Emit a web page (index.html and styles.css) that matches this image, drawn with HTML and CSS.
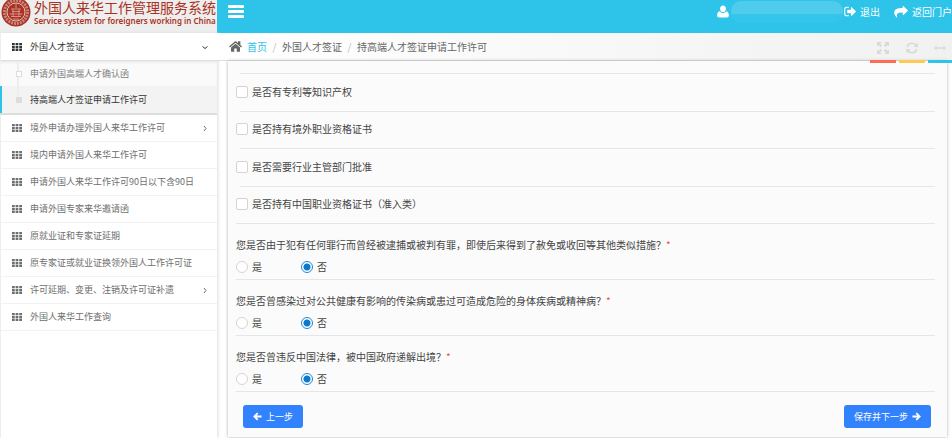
FILE: index.html
```html
<!DOCTYPE html>
<html lang="zh-CN">
<head>
    <meta charset="UTF-8">
    <meta name="viewport" content="width=device-width, initial-scale=1.0">
    <title>外国人来华工作管理服务系统</title>
    <link rel="stylesheet" href="styles.css">
</head>
<body>
    <!-- 图标 -->
    <svg class="sprite" aria-hidden="true">
        <symbol id="i-th" viewBox="0 0 20 16">
            <path d="M0 0h5.500v4.500H0zM7.200 0h5.500v4.500H7.200zM14.500 0H20v4.500h-5.500zM0 5.800h5.500v4.500H0zM7.200 5.800h5.500v4.500H7.200zM14.500 5.800H20v4.500h-5.500zM0 11.500h5.500V16H0zM7.200 11.500h5.500V16H7.200zM14.500 11.500H20V16h-5.500z"/>
        </symbol>
        <symbol id="i-home" viewBox="0 0 26 22">
            <path d="M22 13v7.500c0 .6-.4 1-1 1h-5.500v-6.500h-5v6.500H5c-.6 0-1-.4-1-1V13l9-7.500z"/>
            <path d="M25.600 11.300l-1 1.100c-.3.300-.7.300-1 .1L13 3.600 2.400 12.500c-.3.200-.7.200-1-.1l-1-1.100c-.2-.3-.2-.7.100-1L11.600 1c.8-.7 2-.7 2.800 0L18 4V1.200c0-.4.300-.7.700-.7H22c.4 0 .7.300.7.700v6.700l2.800 2.400c.3.300.3.700.1 1z"/>
        </symbol>
        <symbol id="i-user" viewBox="0 0 22 24">
            <path d="M11 1c3.200 0 5.500 2.500 5.500 6s-2.300 6.500-5.500 6.500S5.500 10.500 5.500 7 7.800 1 11 1z"/>
            <path d="M5 11.500c1.500 2 3.500 3.500 6 3.500s4.500-1.500 6-3.500c3.500.5 4.800 4 4.800 8 0 2.200-1.500 3.500-3.600 3.500H3.800C1.700 23 .2 21.700.2 19.500c0-4 1.300-7.500 4.800-8z"/>
        </symbol>
        <symbol id="i-out" viewBox="0 0 24 20">
            <path d="M9 1.500H5A3.500 3.500 0 0 0 1.500 5v10A3.500 3.500 0 0 0 5 18.500h4" fill="none" stroke="currentColor" stroke-width="2.200" stroke-linecap="round"/>
            <path d="M23.600 10.600l-8 8c-.7.700-1.600.3-1.600-.6V13.500H7.500c-.6 0-1-.4-1-1v-5c0-.6.4-1 1-1H14V2c0-.9.900-1.300 1.600-.6l8 8c.4.400.4.800 0 1.200z"/>
        </symbol>
        <symbol id="i-share" viewBox="0 0 28 24">
            <path d="M27.600 9.700l-8.500 8.100c-.7.700-1.700.3-1.700-.7V12.800c-7 0-11.800.9-11.800 6 0 1.200.3 2.500.8 3.700.3.800-.5 1.200-1 .5C2.500 19.300.4 16.300.4 13 .4 6 7.500 3.800 17.400 3.800V1c0-1 1-1.400 1.700-.7l8.500 8.200c.4.400.4.800 0 1.200z"/>
        </symbol>
        <symbol id="i-expand" viewBox="0 0 24 24">
            <path d="M0 0h9L6.200 2.800l4 4-3.400 3.400-4-4L0 9zM24 0v9l-2.800-2.800-4 4-3.400-3.400 4-4L15 0zM0 24v-9l2.800 2.800 4-4 3.400 3.400-4 4L9 24zM24 24h-9l2.800-2.800-4-4 3.400-3.400 4 4L24 15z"/>
        </symbol>
        <symbol id="i-refresh" viewBox="0 0 24 24">
            <path d="M2.500 10C3.500 5 7.500 2.500 12 2.500c3 0 5.600 1.200 7.600 3.200M21.500 14c-1 5-5 7.500-9.500 7.500-3 0-5.600-1.200-7.600-3.200" fill="none" stroke="currentColor" stroke-width="3.400"/>
            <path d="M23.500 1v9h-9zM.5 23v-9h9z"/>
        </symbol>
        <symbol id="i-width" viewBox="0 0 28 12">
            <path d="M0 6l6-6v4.200h16V0l6 6-6 6V7.800H6V12z"/>
        </symbol>
        <symbol id="i-left" viewBox="0 0 20 20">
            <path d="M10.500 2.500L3 10l7.500 7.500M4 10h15" fill="none" stroke="currentColor" stroke-width="4"/>
        </symbol>
        <symbol id="i-right" viewBox="0 0 20 20">
            <path d="M9.500 2.500L17 10l-7.500 7.500M16 10H1" fill="none" stroke="currentColor" stroke-width="4"/>
        </symbol>
        <symbol id="i-arrow" viewBox="0 0 8 8">
            <path d="M3 2l2 2.500-2 2.500" fill="none" stroke="currentColor"/>
        </symbol>
        <symbol id="i-down" viewBox="0 0 8 8">
            <path d="M1.500 3.500l2.500 2 2.500-2" fill="none" stroke="currentColor"/>
        </symbol>
        <symbol id="i-logo" viewBox="0 0 30 30">
            <circle cx="15" cy="15" r="14.500" fill="#a93223"/>
            <circle cx="15" cy="15" r="11.500" fill="none" stroke="#c9857a" stroke-width="3" stroke-dasharray="2 1"/>
            <circle cx="15" cy="15" r="9" fill="#a93223" stroke="#e6c3bd"/>
            <path d="M15 7v4M10 12h10M11 14.500h8M8.500 17h13M10 19.500h10M12 22h6M12 12v7M18 12v7" fill="none" stroke="#cf9389"/>
        </symbol>
    </svg>

    <header class="header">
        <a class="brand" href="#">
            <svg class="brand-logo"><use href="#i-logo"/></svg>
            <span class="brand-text">
                <span class="brand-cn">外国人来华工作管理服务系统</span>
                <span class="brand-en">Service system for foreigners working in China</span>
            </span>
        </a>
        <div class="navbar">
            <button class="menu-toggle" type="button" aria-label="菜单"><span></span><span></span><span></span></button>
            <div class="nav-right">
                <svg class="icon-user"><use href="#i-user"/></svg>
                <span class="user-name"></span>
                <a class="nav-link" href="#"><svg class="icon-out"><use href="#i-out"/></svg>退出</a>
                <a class="nav-link" href="#"><svg class="icon-share"><use href="#i-share"/></svg>返回门户</a>
            </div>
        </div>
    </header>

    <div class="container">
        <nav class="sidebar">
            <a class="side-item open" href="#"><svg class="icon-th"><use href="#i-th"/></svg>外国人才签证<svg class="arrow"><use href="#i-down"/></svg></a>
            <div class="submenu">
                <a class="sub-item" href="#">申请外国高端人才确认函</a>
                <a class="sub-item active" href="#">持高端人才签证申请工作许可</a>
            </div>
            <a class="side-item" href="#"><svg class="icon-th"><use href="#i-th"/></svg>境外申请办理外国人来华工作许可<svg class="arrow"><use href="#i-arrow"/></svg></a>
            <a class="side-item" href="#"><svg class="icon-th"><use href="#i-th"/></svg>境内申请外国人来华工作许可</a>
            <a class="side-item" href="#"><svg class="icon-th"><use href="#i-th"/></svg>申请外国人来华工作许可90日以下含90日</a>
            <a class="side-item" href="#"><svg class="icon-th"><use href="#i-th"/></svg>申请外国专家来华邀请函</a>
            <a class="side-item" href="#"><svg class="icon-th"><use href="#i-th"/></svg>原就业证和专家证延期</a>
            <a class="side-item" href="#"><svg class="icon-th"><use href="#i-th"/></svg>原专家证或就业证换领外国人工作许可证</a>
            <a class="side-item" href="#"><svg class="icon-th"><use href="#i-th"/></svg>许可延期、变更、注销及许可证补遗<svg class="arrow"><use href="#i-arrow"/></svg></a>
            <a class="side-item" href="#"><svg class="icon-th"><use href="#i-th"/></svg>外国人来华工作查询</a>
        </nav>

        <main class="content">
            <div class="page-bar">
                <div class="breadcrumb">
                    <svg class="icon-home"><use href="#i-home"/></svg>
                    <a href="#">首页</a>
                    <span class="sep">/</span>
                    <span>外国人才签证</span>
                    <span class="sep">/</span>
                    <span>持高端人才签证申请工作许可</span>
                </div>
                <div class="tools">
                    <button class="tool red" type="button" aria-label="全屏"><svg class="icon-tool"><use href="#i-expand"/></svg></button>
                    <button class="tool yellow" type="button" aria-label="刷新"><svg class="icon-tool"><use href="#i-refresh"/></svg></button>
                    <button class="tool blue" type="button" aria-label="宽度"><svg class="icon-tool"><use href="#i-width"/></svg></button>
                </div>
            </div>

            <form class="panel">
                <div class="checks">
                    <label class="check-row"><input type="checkbox">是否有专利等知识产权</label>
                    <label class="check-row"><input type="checkbox">是否持有境外职业资格证书</label>
                    <label class="check-row"><input type="checkbox">是否需要行业主管部门批准</label>
                    <label class="check-row"><input type="checkbox">是否持有中国职业资格证书（准入类）</label>
                </div>
                <fieldset class="question">
                    <legend>您是否由于犯有任何罪行而曾经被逮捕或被判有罪，即使后来得到了赦免或收回等其他类似措施？<span class="required">*</span></legend>
                    <div class="options">
                        <label><input type="radio" name="crime">是</label>
                        <label><input type="radio" name="crime" checked>否</label>
                    </div>
                </fieldset>
                <fieldset class="question">
                    <legend>您是否曾感染过对公共健康有影响的传染病或患过可造成危险的身体疾病或精神病？<span class="required">*</span></legend>
                    <div class="options">
                        <label><input type="radio" name="disease">是</label>
                        <label><input type="radio" name="disease" checked>否</label>
                    </div>
                </fieldset>
                <fieldset class="question">
                    <legend>您是否曾违反中国法律，被中国政府递解出境？<span class="required">*</span></legend>
                    <div class="options">
                        <label><input type="radio" name="deport">是</label>
                        <label><input type="radio" name="deport" checked>否</label>
                    </div>
                </fieldset>
                <div class="actions">
                    <button class="btn" type="button"><svg class="icon-btn"><use href="#i-left"/></svg>上一步</button>
                    <button class="btn" type="button">保存并下一步<svg class="icon-btn"><use href="#i-right"/></svg></button>
                </div>
            </form>
        </main>
    </div>
</body>
</html>
```
FILE: styles.css
```css
* {
    box-sizing: border-box;
}
body {
    font-family: "Noto Sans CJK SC", sans-serif;
    font-size: 10px;
    line-height: 16px;
    margin: 0;
    color: #444;
    background-color: #fff;
    min-height: 100vh;
    display: flex;
    flex-direction: column;
    overflow: hidden;
}
a {
    color: inherit;
    text-decoration: none;
}
button, input {
    font: inherit;
    margin: 0;
}
svg {
    fill: currentColor;
    flex-shrink: 0;
}
.sprite {
    display: none;
}

/* 顶部 */
.header {
    display: flex;
    height: 33px;
}
.brand {
    width: 217px;
    flex-shrink: 0;
    background-color: #eee;
    color: #a93223;
    display: flex;
    align-items: flex-end;
    gap: 3px;
    padding: 0 0 6px 1px;
    white-space: nowrap;
}
.brand-logo {
    width: 30px;
    height: 30px;
}
.brand-text {
    display: flex;
    flex-direction: column;
}
.brand-cn {
    font-size: 14px;
    line-height: 15px;
}
.brand-en {
    font-family: "Noto Sans", sans-serif;
    font-size: 8px;
    font-weight: 600;
    line-height: 12px;
}
.navbar {
    flex: 1;
    display: flex;
    justify-content: space-between;
    padding-left: 11px;
    background-color: #2ec3e9;
    color: #fff;
}
.menu-toggle {
    display: flex;
    flex-direction: column;
    gap: 2px;
    width: 16px;
    height: 18px;
    margin-top: 5px;
    padding: 0;
    border: 0;
    background: none;
}
.menu-toggle span {
    height: 3px;
    width: 16px;
    border-radius: 1px;
    background-color: #fff;
}
.nav-right {
    display: flex;
    align-items: center;
    height: 23px;
}
.icon-user {
    width: 12px;
    height: 13px;
}
.user-name {
    width: 112px;
    height: 22px;
    margin-left: 2px;
    border-radius: 10px;
    background: linear-gradient(#4fcbec 60%, #36c5ea 60%);
}
.nav-link {
    display: flex;
    align-items: center;
    gap: 4px;
    margin-left: 1px;
}
.nav-link + .nav-link {
    margin-left: 14px;
}
.icon-out {
    width: 12px;
    height: 11px;
}
.icon-share {
    width: 14px;
    height: 12px;
}

/* 左侧菜单 */
.container {
    display: flex;
    flex: 1;
}
.sidebar {
    width: 217px;
    flex-shrink: 0;
    font-size: 9px;
    color: #6e6e6e;
    border-left: 1px solid #eee;
    box-shadow: 1px 0 3px #ddd;
}
.side-item {
    display: flex;
    align-items: center;
    height: 27px;
    padding: 0 8px 0 11px;
    border-bottom: 1px solid #f2f2f2;
    white-space: nowrap;
}
.side-item.open {
    height: 28px;
    color: #333;
    border-color: #ddd;
}
.icon-th {
    width: 10px;
    height: 8px;
    margin-right: 8px;
}
.arrow {
    width: 8px;
    height: 8px;
    margin-left: auto;
}
.submenu {
    position: relative;
    margin-left: -1px;
    background-color: #fafafa;
    border-bottom: 2px solid #ddd;
    box-shadow: inset 0 2px 2px #eee;
}
/* 子菜单竖线 */
.submenu::before {
    content: "";
    position: absolute;
    left: 17px;
    top: 0;
    height: 38px;
    border-left: 2px solid #eee;
}
.sub-item {
    display: flex;
    align-items: center;
    height: 25px;
    padding-left: 30px;
    color: #808080;
}
.sub-item::before {
    content: "";
    position: absolute;
    left: 16px;
    width: 4px;
    height: 4px;
    border: 1px solid #ddd;
    background-color: #fff;
}
.sub-item.active {
    height: 27px;
    padding-left: 28px;
    color: #333;
    background-color: #f3f3f3;
    border-left: 2px solid #2ec3e9;
}
.sub-item.active::before {
    background-color: #ddd;
}

/* 面包屑 */
.content {
    flex: 1;
    min-width: 0;
    display: flex;
    flex-direction: column;
}
.page-bar {
    display: flex;
    justify-content: space-between;
    height: 28px;
    padding-left: 12px;
    background: linear-gradient(to right, #fff, #f1f1f1);
    border-bottom: 1px solid #ddd;
    color: #666;
}
.breadcrumb {
    display: flex;
    align-items: center;
    white-space: nowrap;
}
.breadcrumb a {
    color: #2ec3e9;
}
.icon-home {
    width: 13px;
    height: 11px;
    margin-right: 5px;
}
.sep {
    width: 15px;
    text-align: center;
    color: #bbb;
}
.tools {
    display: flex;
    gap: 3px;
    height: 30px;
    position: relative;
    z-index: 1;
}
.tool {
    width: 26px;
    padding: 3px 0 0;
    border: 0;
    border-bottom: 3px solid;
    background: none;
    display: flex;
    align-items: center;
    justify-content: center;
}
.tool.red {
    border-color: #fa6e57;
}
.tool.yellow {
    border-color: #fdcb54;
}
.tool.blue {
    width: 24px;
    border-color: #2ec3e9;
}
.icon-tool {
    width: 12px;
    height: 12px;
    color: #d9d9d9;
}

/* 表单 */
.panel {
    flex: 1;
    margin: 0 5px 1px 11px;
    padding: 12px 12px 8px 8px;
    background-color: #fbfbfb;
    box-shadow: 0 0 3px #aaa;
}
.checks {
    display: grid;
    grid-template-rows: repeat(4, 1fr);
    height: 151px;
    border-bottom: 1px solid #e6e6e6;
}
.check-row {
    position: relative;
    display: flex;
    align-items: center;
    gap: 4px;
}
.check-row::before {
    content: "";
    position: absolute;
    top: 0;
    left: 4px;
    right: 0;
    border-top: 1px solid #e6e6e6;
}
input {
    appearance: none;
    width: 12px;
    height: 12px;
    border: 1px solid #d4d4d4;
    background-color: #fff;
}
input[type="checkbox"] {
    border-radius: 2px;
}
input[type="radio"] {
    border-radius: 50%;
}
input[type="radio"]:checked {
    border-color: #1a8ad4;
    background: radial-gradient(circle, #0a78cc 3px, #fff 4px);
}
.question {
    margin: 0;
    height: 56px;
    padding: 13px 0 0;
    border: 0;
    border-bottom: 1px solid #e6e6e6;
    min-width: 0;
}
.question legend {
    float: left;
    width: 100%;
    padding: 0;
}
.required {
    color: #f0503c;
}
.options {
    clear: both;
    display: flex;
    padding-top: 6px;
}
.options label {
    display: flex;
    align-items: center;
    gap: 4px;
    width: 65px;
}
.actions {
    display: flex;
    justify-content: space-between;
    padding: 13px 4px 0 7px;
}
.btn {
    display: flex;
    align-items: center;
    gap: 4px;
    height: 23px;
    padding: 0 10px;
    border: 0;
    border-radius: 3px;
    font-size: 9px;
    color: #fff;
    background-color: #3382fd;
    cursor: pointer;
}
.icon-btn {
    width: 9px;
    height: 9px;
}
```
